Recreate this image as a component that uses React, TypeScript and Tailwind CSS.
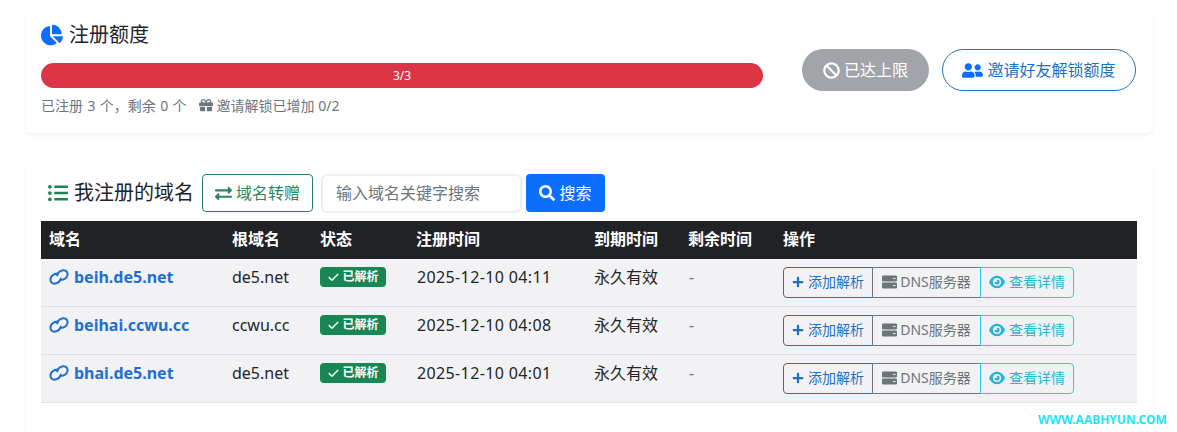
import { Check } from "lucide-react";
import {
  FaBan,
  FaChartPie,
  FaExchangeAlt,
  FaGift,
  FaListUl,
  FaPlus,
  FaSearch,
  FaUserFriends,
} from "react-icons/fa";

const domains = [
  { name: "beih.de5.net", root: "de5.net", time: "2025-12-10 04:11" },
  { name: "beihai.ccwu.cc", root: "ccwu.cc", time: "2025-12-10 04:08" },
  { name: "bhai.de5.net", root: "de5.net", time: "2025-12-10 04:01" },
];

const LinkIcon = () => (
  <svg width="20" height="16" viewBox="0 0 20 16" fill="none" stroke="currentColor" strokeWidth="2" strokeLinecap="round" className="mr-[5px] shrink-0">
    <path d="M8.4 4.6 C5.4 4.8 2.4 6.8 1.6 9.6 C0.9 12.6 3 15 6 14.6 C8.8 14.2 11 12.2 11.8 9.6" />
    <path d="M11.6 11 C14.6 10.8 17.6 8.8 18.4 6.2 C19.1 3.2 17 0.9 14 1.3 C11.2 1.7 9 3.7 8.2 6.4" />
  </svg>
);

const ServerIcon = () => (
  <svg width="15" height="14" viewBox="0 0 15 14" fill="currentColor" className="shrink-0">
    <path fillRule="evenodd" d="M1 0.5 H14 A1 1 0 0 1 15 1.5 V5.5 A1 1 0 0 1 14 6.5 H1 A1 1 0 0 1 0 5.5 V1.5 A1 1 0 0 1 1 0.5 Z M11 3 V4 H13.5 V3 Z" />
    <path fillRule="evenodd" d="M1 7.5 H14 A1 1 0 0 1 15 8.5 V12.5 A1 1 0 0 1 14 13.5 H1 A1 1 0 0 1 0 12.5 V8.5 A1 1 0 0 1 1 7.5 Z M11 10 V11 H13.5 V10 Z" />
  </svg>
);

const EyeIcon = () => (
  <svg width="16" height="14" viewBox="0 0 16 14" className="shrink-0">
    <path d="M8 0.8 C12 0.8 14.8 4 16 7 C14.8 10 12 13.2 8 13.2 C4 13.2 1.2 10 0 7 C1.2 4 4 0.8 8 0.8 Z" fill="currentColor" />
    <circle cx="8" cy="7" r="4" fill="#f2f2f4" />
    <path d="M8 4.4 A2.6 2.6 0 1 1 5.4 7 L8 7 Z" fill="currentColor" />
  </svg>
);

const App = () => {
  return (
    <div className="relative h-[432px] w-[1177px] overflow-hidden bg-white pl-[26px] pr-[24px] pt-[10px] font-['Noto_Sans','Noto_Sans_CJK_SC',sans-serif] text-[#212529]">
      <div className="flex h-[123px] items-start rounded-md bg-white pl-[15px] pr-[17px] shadow-[0_2px_4px_rgba(0,0,0,0.06)]">
        <div className="w-[722px]">
          <h2 className="mt-[11px] flex h-[28px] items-center text-[20px] font-normal leading-none">
            <FaChartPie className="mr-[6px] text-[22px] text-[#0d6efd]" />
            注册额度
          </h2>
          <div className="mt-[14px] flex h-[25px] items-center justify-center rounded-full bg-[#dc3545] text-[12px] text-white">
            3/3
          </div>
          <div className="mt-[7px] flex h-[20px] items-center text-[14px] text-[#6c757d]">
            <span className="[word-spacing:0.75px]">已注册 3 个，剩余 0 个</span>
            <FaGift className="ml-[12px] mr-[4px] text-[14px]" />
            <span>邀请解锁已增加 0/2</span>
          </div>
        </div>
        <div className="mt-[39px] flex flex-1 justify-end gap-[13px]">
          <button className="flex h-[42px] w-[127px] items-center justify-center gap-[4px] rounded-full bg-[#a1a4a8] text-[16px] text-white">
            <FaBan className="text-[17px]" />
            已达上限
          </button>
          <button className="flex h-[42px] w-[194px] items-center justify-center gap-[4px] rounded-full border border-[#2a70b8] text-[16px] text-[#1e6fc4]">
            <FaUserFriends className="text-[21px] text-[#0d6efd]" />
            邀请好友解锁额度
          </button>
        </div>
      </div>

      <div className="mt-[29px] h-[300px] rounded-md bg-white px-[15px] pt-[12px] shadow-[0_2px_4px_rgba(0,0,0,0.06)]">
        <div className="flex h-[38px] items-center">
          <FaListUl className="ml-[7px] mr-[6px] text-[20px] text-[#198754]" />
          <span className="text-[20px]">我注册的域名</span>
          <button className="ml-[8px] flex h-[38px] w-[111px] items-center justify-center gap-[4px] rounded-[4px] border border-[#2c7f5c] text-[16px] text-[#2c8560]">
            <FaExchangeAlt className="text-[17px]" />
            域名转赠
          </button>
          <div className="ml-[8px] flex h-[39px] w-[201px] items-center rounded-[6px] border-2 border-[#eeeff2] pl-[13px] text-[16px] text-[#6c757d]">
            输入域名关键字搜索
          </div>
          <button className="ml-[4px] flex h-[38px] w-[79px] items-center justify-center gap-[4px] rounded-[4px] bg-[#0d6efd] text-[16px] text-white">
            <FaSearch className="text-[16px]" />
            搜索
          </button>
        </div>

        <table className="mt-[9px] w-[1096px] table-fixed border-separate border-spacing-0 text-left">
          <colgroup>
            <col className="w-[183px]" />
            <col className="w-[88px]" />
            <col className="w-[96px]" />
            <col className="w-[178px]" />
            <col className="w-[94px]" />
            <col className="w-[95px]" />
            <col />
          </colgroup>
          <thead>
            <tr className="h-[38px] bg-[#212226] text-[16px] text-white">
              {["域名", "根域名", "状态", "注册时间", "到期时间", "剩余时间", "操作"].map((h) => (
                <th key={h} className="pb-[2px] pl-[8px] font-bold">
                  {h}
                </th>
              ))}
            </tr>
          </thead>
          <tbody>
            {domains.map((d) => (
              <tr key={d.name} className="h-[48px] bg-[#f2f2f4] align-top text-[16px] [&>td]:border-b [&>td]:border-[#dee2e6]">
                <td className="pl-[8px] pt-[6px]">
                  <a className="flex items-center font-bold text-[#1e6fd0]">
                    <LinkIcon />
                    {d.name}
                  </a>
                </td>
                <td className="pl-[8px] pt-[6px]">{d.root}</td>
                <td className="pl-[8px] pt-[8px]">
                  <span className="flex h-[20px] w-[66px] items-center justify-center gap-[2px] rounded-[4px] bg-[#198754] text-[12px] font-bold text-white">
                    <Check size={13} strokeWidth={2.5} />
                    已解析
                  </span>
                </td>
                <td className="pl-[9px] pt-[6px] tracking-[0.37px]">{d.time}</td>
                <td className="pl-[8px] pt-[6px]">永久有效</td>
                <td className="pl-[9px] pt-[6px] text-[#6c757d]">-</td>
                <td className="pl-[8px] pt-[8px]">
                  <div className="flex h-[31px] w-[291px] text-[14px] leading-[20px] [&>button]:pb-[1px]">
                    <button className="flex w-[90px] items-center justify-center gap-[4px] rounded-l-[4px] border border-[#2a70b8] text-[#1e6fc4]">
                      <FaPlus className="text-[12px]" />
                      添加解析
                    </button>
                    <button className="-ml-px flex w-[109px] items-center justify-center gap-[3px] border border-[#6c757d] text-[#6c757d]">
                      <ServerIcon />
                      DNS服务器
                    </button>
                    <button className="-ml-px flex w-[94px] items-center justify-center gap-[4px] rounded-r-[4px] border border-[#22d3ee] text-[#24b5d6]">
                      <EyeIcon />
                      查看详情
                    </button>
                  </div>
                </td>
              </tr>
            ))}
          </tbody>
        </table>
      </div>

      <div className="absolute left-[1038px] top-[411px] text-[12px] font-bold text-[#1fe6f5]">
        WWW.AABHYUN.COM
      </div>
    </div>
  );
};

export default App;
